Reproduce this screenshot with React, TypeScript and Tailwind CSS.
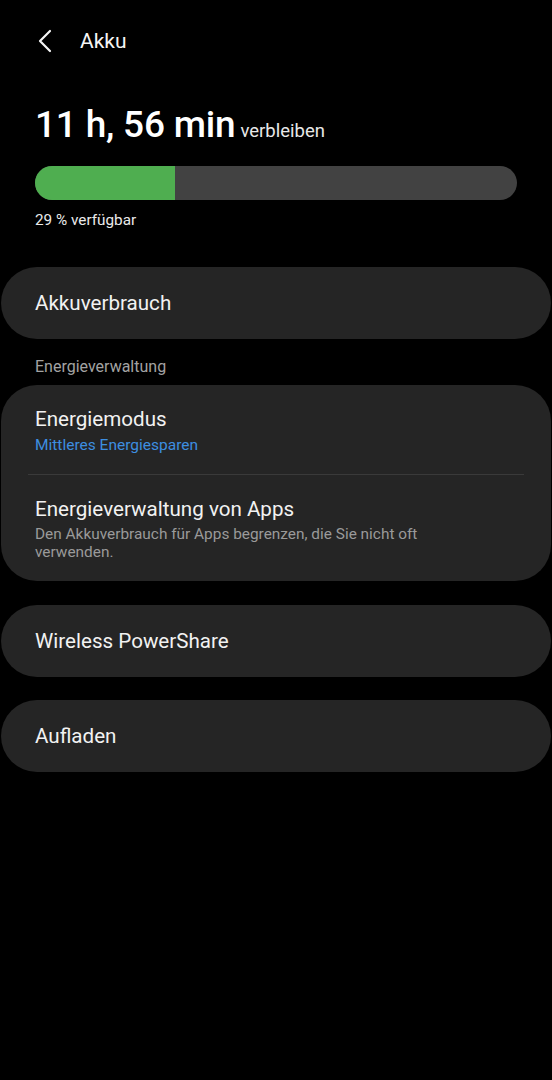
import React from 'react';

const font = { fontFamily: 'Roboto, "Noto Sans", Arial, sans-serif' };

function Card({ children, className = '' }: { children: React.ReactNode; className?: string }) {
    return <div className={`mx-px rounded-[36px] bg-[#252525] ${className}`}>{children}</div>;
}

function SimpleRow({ title }: { title: string }) {
    return (
        <Card className="flex h-[72px] items-center px-[34px]">
            <span className="text-[20.6px] leading-[26px] text-[#f2f2f2]">{title}</span>
        </Card>
    );
}

export default function App() {
    const percent = 29;

    return (
        <div className="min-h-[1080px] w-full bg-black text-white" style={font}>
            <header className="flex h-[82px] items-center pl-[37px]">
                <svg width="16" height="24" viewBox="0 0 16 24" fill="none" className="mt-[-1px]">
                    <path d="M13 2 L3 12 L13 22" stroke="#f5f5f5" strokeWidth="2.2" strokeLinecap="round" strokeLinejoin="round" />
                </svg>
                <h1 className="ml-[27px] text-[21px] leading-[28px] text-[#f5f5f5]">Akku</h1>
            </header>

            <div className="px-[35px]">
                <div className="mt-[25px] flex items-baseline">
                    <span className="text-[37px] leading-[36px] font-medium tracking-[-0.2px]">11 h, 56 min</span>
                    <span className="ml-[5px] text-[18.5px] text-[#e8e8e8]">verbleiben</span>
                </div>

                <div className="mt-[20px] h-[34px] w-full overflow-hidden rounded-full bg-[#424242]">
                    <div className="h-full bg-[#4fae50]" style={{ width: `${percent}%` }} />
                </div>

                <p className="mt-[10px] text-[15.3px] leading-[20px] text-[#eaeaea]">{percent} % verfügbar</p>
            </div>

            <div className="mt-[37px]">
                <SimpleRow title="Akkuverbrauch" />
            </div>

            <p className="mt-[18px] mb-[8px] px-[35px] text-[16px] leading-[20px] text-[#a3a3a3]">Energieverwaltung</p>

            <Card className="pt-[21px] pb-[20px]">
                <div className="px-[34px]">
                    <p className="text-[20.6px] leading-[26px] text-[#f2f2f2]">Energiemodus</p>
                    <p className="mt-[2px] text-[15.5px] leading-[22px] text-[#3d8ee0]">Mittleres Energiesparen</p>
                </div>
                <div className="mx-[27px] mt-[18px] h-px bg-[#3a3a3a]" />
                <div className="mt-[21px] px-[34px]">
                    <p className="text-[20.6px] leading-[26px] text-[#f2f2f2]">Energieverwaltung von Apps</p>
                    <p className="mt-[3px] max-w-[400px] text-[15.4px] leading-[18px] text-[#9a9a9a]">
                        Den Akkuverbrauch für Apps begrenzen, die Sie nicht oft verwenden.
                    </p>
                </div>
            </Card>

            <div className="mt-[24px] flex flex-col gap-[23px]">
                <SimpleRow title="Wireless PowerShare" />
                <SimpleRow title="Aufladen" />
            </div>
        </div>
    );
}
